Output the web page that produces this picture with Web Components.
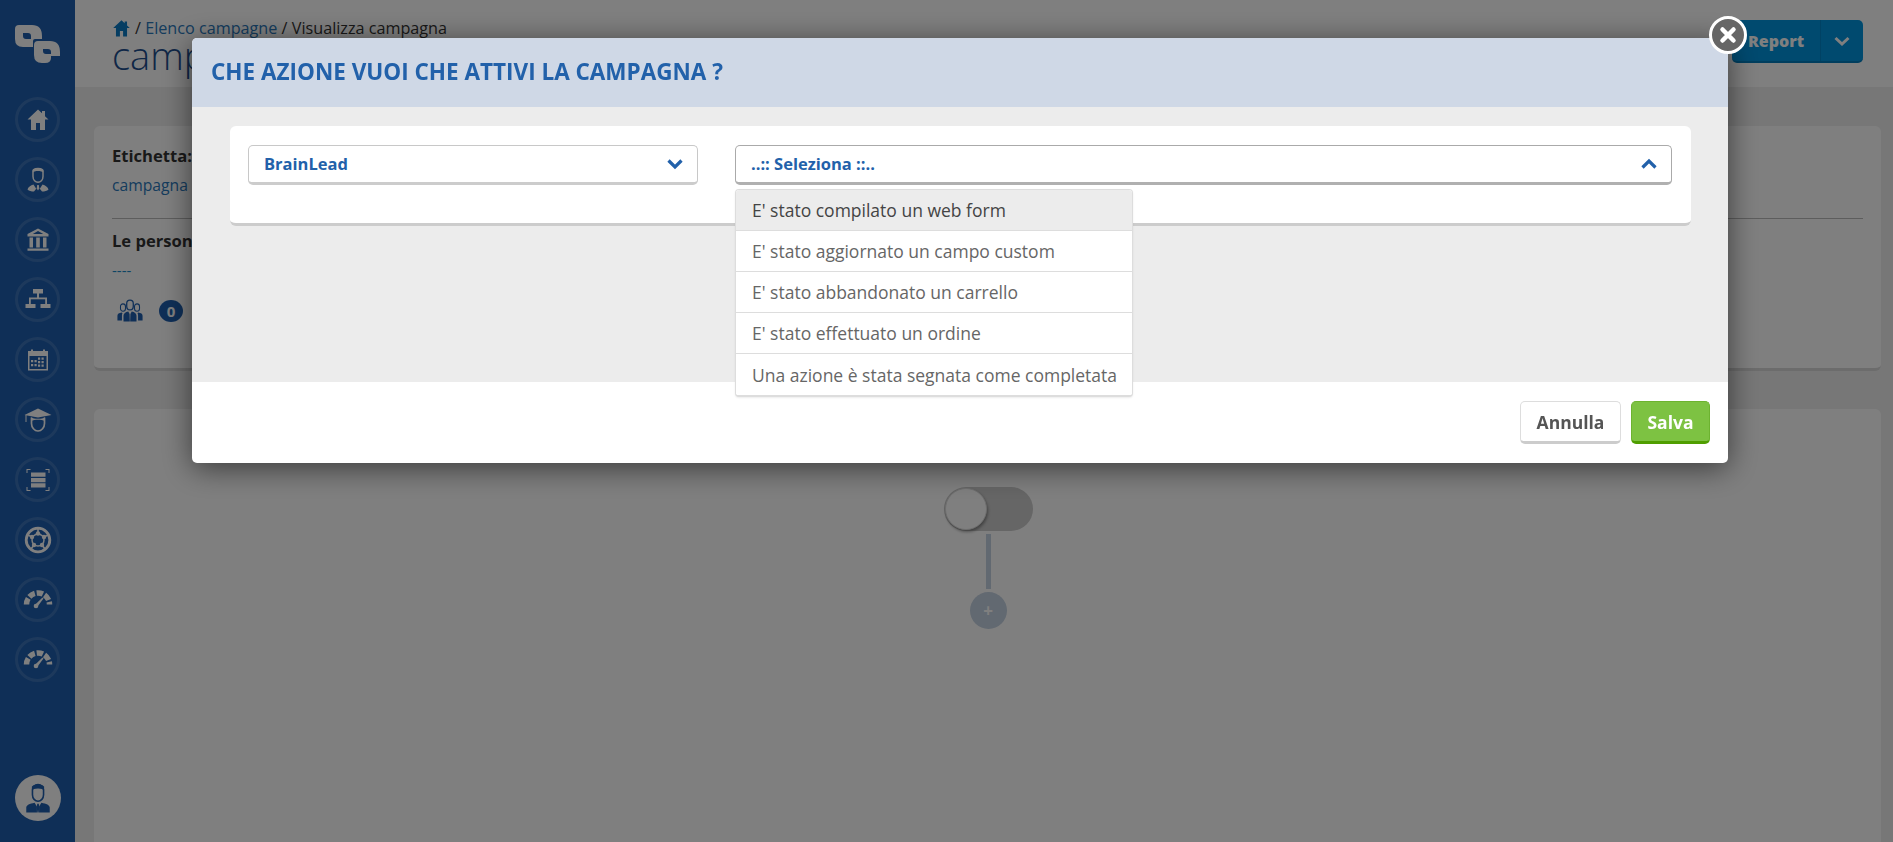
<!DOCTYPE html>
<html lang="it">
<head>
<meta charset="utf-8">
<title>Visualizza campagna</title>
<style>
  html,body{margin:0;height:842px;overflow:hidden;background:#eee;font-family:"Open Sans","Liberation Sans",sans-serif;color:#333}
  body{display:flex}
</style>
</head>
<body>
<app-sidebar>
  <nav-icon name="home"></nav-icon>
  <nav-icon name="advisor"></nav-icon>
  <nav-icon name="bank"></nav-icon>
  <nav-icon name="org"></nav-icon>
  <nav-icon name="calendar"></nav-icon>
  <nav-icon name="grad"></nav-icon>
  <nav-icon name="scan"></nav-icon>
  <nav-icon name="ball"></nav-icon>
  <nav-icon name="gauge"></nav-icon>
  <nav-icon name="gauge"></nav-icon>
</app-sidebar>
<app-main></app-main>
<action-modal title="CHE AZIONE VUOI CHE ATTIVI LA CAMPAGNA ?">
  <form-select value="BrainLead"></form-select>
  <form-select value="..:: Seleziona ::.." open grow>
    <menu-item active>E' stato compilato un web form</menu-item>
    <menu-item>E' stato aggiornato un campo custom</menu-item>
    <menu-item>E' stato abbandonato un carrello</menu-item>
    <menu-item>E' stato effettuato un ordine</menu-item>
    <menu-item>Una azione è stata segnata come completata</menu-item>
  </form-select>
</action-modal>
<script>
const ICONS = {
  home:`<path fill="currentColor" d="M15 4.500 4.500 14.500H8V25h5v-7h4v7h5V14.500h3.500L22 11.200V6h-3v2.300z"/>`,
  advisor:`<g fill="currentColor"><path fill="none" stroke="currentColor" stroke-width="1.500" d="M10 6.500c0-1.800 2.200-3 5-3s5 1.200 5 3v5c0 3.500-2.500 5.800-5 5.800s-5-2.300-5-5.800z"/><path d="M9.800 7.500c1.300-2 8.900-2 10.400 0l.2-2.500c-1.500-2.300-9.300-2.300-10.800 0z"/><path d="M4.500 24.500c.6-2.400 3.100-4 6-5l2.700 4.300-2.200 2.700c-2.700 0-5-.6-6.500-2zM25.500 24.500c-.6-2.400-3.100-4-6-5l-2.700 4.300 2.200 2.700c2.700 0 5-.6 6.500-2z"/><path d="M14.200 20h1.600l.5 3.500-1.300 2-1.300-2z"/></g>`,
  bank:`<g fill="currentColor"><path d="M15 3.500 4.500 9v2.500h21V9zM15 6 9.800 9h10.400z" fill-rule="evenodd"/><path d="M6.500 12.500h3.500v10H6.500zM13.200 12.500h3.600v10h-3.600zM20 12.500h3.500v10H20zM4.500 23.500h21v2.200h-21z"/></g>`,
  org:`<g fill="currentColor"><rect x="10" y="4" width="10" height="4.500"/><rect x="14" y="8" width="2" height="5"/><rect x="6" y="12.500" width="18" height="1.800"/><rect x="6" y="13" width="1.800" height="6"/><rect x="22.200" y="13" width="1.800" height="6"/><rect x="2.500" y="19" width="10" height="4"/><rect x="17.500" y="19" width="10" height="4"/></g>`,
  calendar:`<g fill="currentColor"><path fill-rule="evenodd" d="M5 6h3V4.500h2V6h10V4.500h2V6h3v19.500H5zM6.500 11v13h17V11z"/><path d="M8 15h2.200v2.200H8zM11.500 15h2.200v2.200h-2.200zM15 12.500h2.200v2.200H15zM18.500 12.500h2.200v2.200h-2.200zM15 16h2.200v2.200H15zM18.500 16h2.200v2.200h-2.200zM8 19h2.200v2.200H8zM11.500 19h2.200v2.200h-2.200zM15 19.500h2.200v2.200H15zM18.500 19.500h2.200v2.200h-2.200z"/></g>`,
  grad:`<g fill="currentColor"><path d="M15 3.500 1.500 10l13.500 2.500L28.500 10z"/><rect x="2.500" y="10" width="1" height="7"/><path fill="none" stroke="currentColor" stroke-width="1.700" d="M8.500 12.500v6c0 4 3 7.500 6.500 7.500s6.500-3.500 6.500-7.500v-6"/><path d="M8 12.500c3 1.800 11 1.800 14 0v3.500c-4-1.800-10-1.800-14 0z"/></g>`,
  scan:`<g fill="currentColor"><path d="M3.500 4h4v1h-3v3h-1zM26.500 4h-4v1h3v3h1zM3.500 26h4v-1h-3v-3h-1zM26.500 26h-4v-1h3v-3h1z"/><path d="M8 7.500h14.500v4.300H8zM8 12.900h14.500v4.300H8zM8 18.300h14.500v4.300H8z"/></g>`,
  ball:`<g fill="none" stroke="currentColor"><circle cx="15" cy="15" r="11.800" stroke-width="2.800"/><circle cx="15" cy="15" r="6" stroke-width="1.500"/><path stroke-width="1.600" d="M4 10l6 2M26 10l-6 2M8 24l3-4M22 24l-3-4M15 3.500v5"/><g fill="currentColor" stroke="none"><circle cx="9" cy="12" r="2.200"/><circle cx="21" cy="12" r="2.200"/><circle cx="11" cy="20" r="2.200"/><circle cx="19" cy="20" r="2.200"/><circle cx="15" cy="8.500" r="2.200"/></g></g>`,
  gauge:`<path fill="none" stroke="currentColor" stroke-width="5.500" stroke-dasharray="6.400 1.900" d="M3.500 19.500A11.500 11.500 0 0 1 26.500 19.500"/><g fill="currentColor"><circle cx="13" cy="21" r="2.300"/><path d="M12 19.800 19.500 12.500l1 1-6.300 8.500z"/></g>`
};
const icon = (n,s=30) => `<svg width="${s}" height="${s}" viewBox="0 0 30 30" aria-hidden="true">${ICONS[n]}</svg>`;
const PERSON = `<g fill="currentColor"><path fill="none" stroke="currentColor" stroke-width="1.500" d="M9.800 7c0-2.500 2.300-4.500 5.200-4.500S20.200 4.500 20.200 7v5c0 3.400-2.400 6-5.200 6s-5.200-2.600-5.200-6z"/><path d="M9.500 8c1-1.300 2-2 5.500-2s4.500.7 5.500 2l.3-3.500C19 1.200 11 1.200 9.200 4.500z"/><path d="M4 28.500V24c0-2.400 3.200-3.700 7.800-4.600l2.200 3.600v5.500zM26 28.500V24c0-2.400-3.200-3.700-7.800-4.600L16 23v5.500z"/><path d="M14.300 20.500h1.400l.5 3-.6 5h-1.200l-.6-5z"/></g>`;
const GROUP = `<g fill="currentColor"><path fill="none" stroke="currentColor" stroke-width="1.500" d="M11.200 6.500c0-2.400 1.700-4 3.800-4s3.800 1.600 3.800 4v3c0 2.500-1.800 4.300-3.800 4.300s-3.800-1.800-3.800-4.300z"/><path fill="none" stroke="currentColor" stroke-width="1.200" d="M4 10c0-2 1.200-3.200 2.900-3.200S9.800 8 9.800 10v2c0 2-1.300 3.200-2.900 3.200S4 14 4 12zM20.200 10c0-2 1.200-3.200 2.900-3.200S26 8 26 10v2c0 2-1.300 3.200-2.900 3.200S20.200 14 20.200 12z"/><path d="M7.500 27v-6.500c0-3 2.300-4.300 5.500-5l1.500 3 .3 8.500zM22.500 27v-6.500c0-3-2.300-4.300-5.500-5l-1.500 3-.3 8.500zM.5 26v-5.500c0-2.300 1.700-3.300 5-3.800l.8 1c-.4.8-.6 1.500-.6 2.500V26zM29.500 26v-5.500c0-2.300-1.700-3.300-5-3.800l-.8 1c.4.8.6 1.500.6 2.500V26z"/></g>`;

class Base extends HTMLElement {
  constructor(){ super(); this.attachShadow({mode:'open'}); }
  connectedCallback(){ this.shadowRoot.innerHTML = this.render(); }
}

customElements.define('app-sidebar', class extends Base {
  render(){ return `<style>
    :host{display:flex;flex-direction:column;align-items:center;flex:none;width:75px;height:842px;background:#1e5eae;box-sizing:border-box;padding:25px 0 21px;color:#fff}
    .logo{display:block;margin-bottom:34px}
    nav{display:flex;flex-direction:column;gap:15px}
    .me{margin-top:auto;width:46px;height:46px;border-radius:50%;background:#fff;color:#1e5eae;display:flex;align-items:center;justify-content:center;overflow:hidden}
  </style>
  <svg class="logo" width="45" height="38" viewBox="0 0 45 38" aria-hidden="true"><g fill="#fff" fill-rule="evenodd"><path d="M0 4Q0 0 4 0H17Q27 0 27 11V14H20Q18 14 18 16V22H8Q0 22 0 14ZM8 8H13Q16 8 16 11V14H11Q8 14 8 11Z"/><path d="M19 20Q19 16 23 16H35Q45 16 45 27V31H36V33Q36 38 30 38H27Q19 38 19 30ZM28 24H33Q36 24 36 27V29H31Q28 29 28 26Z"/></g></svg>
  <nav><slot></slot></nav>
  <div class="me"><svg width="32" height="32" viewBox="0 0 30 30" aria-hidden="true">${PERSON}</svg></div>`; }
});

customElements.define('nav-icon', class extends Base {
  render(){ return `<style>
    :host{display:flex;align-items:center;justify-content:center;width:45px;height:45px;box-sizing:border-box;border:3px solid rgba(255,255,255,.13);border-radius:50%;color:#fff}
    svg{display:block;flex:none}
  </style>${icon(this.getAttribute('name'))}`; }
});

customElements.define('page-header', class extends Base {
  render(){ return `<style>
    :host{display:flex;justify-content:space-between;align-items:flex-start;height:87px;box-sizing:border-box;background:#fff;padding:0 30px 0 37px;overflow:hidden}
    .crumb{display:flex;align-items:center;gap:4px;height:20px;margin-top:18px;font-size:16.200px;color:#333;white-space:nowrap}
    .crumb a{color:#2a78bb}
    .crumb svg{color:#0a7ac4}
    h1{margin:-8px 0 0;font-size:38px;line-height:50px;font-weight:300;color:#1f4f8e}
    .split{display:flex;height:43px;margin-top:20px;width:131px;border-radius:5px;background:#0094df;color:#fff;font-weight:700;font-size:16px;border-bottom:2px solid #007dbd;box-sizing:border-box}
    .split b{display:flex;align-items:center;justify-content:flex-end;padding-right:16px;width:89px;box-sizing:border-box;border-right:1px solid #0084c8}
    .split i{display:flex;flex:1;align-items:center;justify-content:center}
  </style>
  <div><div class="crumb"><svg width="19" height="19" viewBox="3 3 24 24" aria-hidden="true">${ICONS.home}</svg><span>/ <a>Elenco campagne</a> / Visualizza campagna</span></div>
  <h1>campagna</h1></div>
  <div class="split"><b>Report</b><i><svg width="16" height="12" viewBox="0 0 16 12" aria-hidden="true"><path d="M1.500 3 8 9l6.500-6" fill="none" stroke="currentColor" stroke-width="3"/></svg></i></div>`; }
});

customElements.define('page-card', class extends Base {
  render(){ return `<style>
    :host{display:block;background:#fff;border-radius:6px;box-sizing:border-box}
    :host([fill]){flex:1;margin-top:38px}
    :host(:not([fill])){height:245px;border-bottom:3px solid #d8d8d8;padding:0 18px 0 18px}
  </style><slot></slot>`; }
});

customElements.define('info-block', class extends Base {
  render(){ return `<style>
    :host{display:block}
    h4{margin:0;font-size:16.600px;font-weight:700;color:#333;line-height:20px}
    .a{margin-top:9px;height:20px;font-size:15.700px;line-height:20px;color:#2a78bb;white-space:nowrap}
    .l1{padding-top:20px;height:93px;box-sizing:border-box;border-bottom:1px solid #bbb}
    .l2{padding-top:12px}
    .l2 .a{color:#1a8ac8;font-size:15px}
    .stat{display:flex;align-items:center;gap:16px;margin-top:18px;padding-left:5px;color:#1e5eae}
    .n{display:flex;align-items:center;justify-content:center;width:24px;height:22px;border-radius:50%;background:#1e5eae;color:#fff;font-weight:700;font-size:15px}
  </style>
  <div class="l1"><h4>Etichetta:</h4><div class="a">campagna c</div></div>
  <div class="l2"><h4>Le persone</h4><div class="a">----</div>
  <div class="stat"><svg width="26" height="26" viewBox="0 0 30 30" aria-hidden="true">${GROUP}</svg><span class="n">0</span></div></div>`; }
});

customElements.define('flow-start', class extends Base {
  render(){ return `<style>
    :host{display:flex;flex-direction:column;align-items:center;padding-top:78px;margin-left:1px}
    .tg{width:89px;height:44px;border-radius:22px;background:#ccc;box-sizing:border-box;padding:1px}
    .kn{width:40px;height:40px;border-radius:50%;background:#fff;border:1px solid #ddd;box-shadow:1px 2px 3px rgba(0,0,0,.35)}
    .ln{width:5px;height:55px;margin-top:3px;background:#c4d2e2}
    .pl{width:37px;height:37px;border-radius:50%;margin-top:3px;background:#c4d2e2;color:#fff;display:flex;align-items:center;justify-content:center;font-weight:700;font-size:17px}
  </style><div class="tg"><div class="kn"></div></div><div class="ln"></div><div class="pl">+</div>`; }
});

customElements.define('app-main', class extends Base {
  render(){ return `<style>
    :host{display:flex;flex-direction:column;flex:1;min-width:0;height:842px}
    .c{flex:1;display:flex;flex-direction:column;padding:39px 12px 0 19px;margin-bottom:-40px}
  </style>
  <page-header></page-header>
  <div class="c">
    <page-card><info-block></info-block></page-card>
    <page-card fill><flow-start></flow-start></page-card>
  </div>`; }
});

customElements.define('action-modal', class extends Base {
  render(){ return `<style>
    :host{position:fixed;inset:0;background:rgba(0,0,0,.5);z-index:10;box-sizing:border-box;padding:38px 0 0 192px;display:block}
    .m{position:relative;width:1536px;height:425px;border-radius:5px;background:#fff;box-shadow:0 5px 30px rgba(0,0,0,.55);display:flex;flex-direction:column}
    header{height:69px;flex:none;background:#cfd8e6;border-radius:5px 5px 0 0;display:flex;align-items:center;padding:0 0 3px 19px;box-sizing:border-box}
    h2{margin:0;font-size:22.500px;font-weight:700;color:#2261aa}
    .b{height:275px;flex:none;background:#ececec;box-sizing:border-box;padding:19px 37px 0 38px}
    .card{height:100px;box-sizing:border-box;background:#fff;border-radius:6px;border-bottom:3px solid #ccc;padding:19px 19px 0 18px;display:flex;gap:37px;align-items:flex-start}
    footer{flex:1;display:flex;justify-content:flex-end;gap:10px;padding:19px 18px 0 0}
    button{height:43px;box-sizing:border-box;border-radius:5px;font:700 17.500px "Open Sans","Liberation Sans",sans-serif;padding:0}
    .ann{width:101px;background:#fff;border:1px solid #ddd;border-bottom:3px solid #ccc;color:#555}
    .sav{width:79px;background:#7dc242;border:1px solid #6db330;border-bottom:3px solid #4f9e00;color:#fff}
    .x{position:absolute;right:-19px;top:-22px;width:38px;height:38px;box-sizing:border-box;border:3px solid #fff;border-radius:50%;background:#666;display:flex;align-items:center;justify-content:center}
  </style>
  <div class="m" role="dialog">
    <header><h2>${this.getAttribute('title')}</h2></header>
    <div class="b"><div class="card"><slot></slot></div></div>
    <footer><button class="ann">Annulla</button><button class="sav">Salva</button></footer>
    <div class="x"><svg width="18" height="18" viewBox="0 0 18 18" aria-hidden="true"><path d="M3.500 3.500l11 11M14.500 3.500l-11 11" stroke="#fff" stroke-width="4.500" stroke-linecap="round"/></svg></div>
  </div>`; }
});

customElements.define('form-select', class extends Base {
  render(){ const open=this.hasAttribute('open'); return `<style>
    :host{display:block;position:relative;flex:none;width:450px}
    :host([grow]){flex:1;width:auto}
    .f{height:40px;box-sizing:border-box;border:1px solid ${open?'#aaa':'#c8c8c8'};border-bottom:3px solid ${open?'#b0b0b0':'#ccc'};border-radius:5px;background:#fff;display:flex;align-items:center;justify-content:space-between;padding:0 14px 2px 15px;font-weight:700;font-size:16.500px;color:#2261aa}
    .f svg{margin-top:2px}
    .menu{position:absolute;left:0;top:44px;width:398px;box-sizing:border-box;background:#fff;border:1px solid #ddd;border-bottom:2px solid #ddd;border-radius:4px;overflow:hidden;z-index:2;box-shadow:0 1px 2px rgba(0,0,0,.08)}
  </style>
  <div class="f"><span>${this.getAttribute('value')}</span><svg width="16" height="12" viewBox="0 0 16 12" aria-hidden="true"><path d="${open?'M1.500 9.500 8 3l6.500 6.500':'M1.500 2.500 8 9l6.500-6.500'}" fill="none" stroke="#2261aa" stroke-width="3.200"/></svg></div>
  ${open?'<div class="menu"><slot></slot></div>':''}`; }
});

customElements.define('menu-item', class extends Base {
  render(){ return `<style>
    :host{display:flex;align-items:center;height:41px;box-sizing:border-box;padding-left:16px;font-size:17.500px;color:#666;background:#fff;border-bottom:1px solid #ddd;white-space:nowrap}
    :host([active]){background:#ececec;color:#444}
    :host(:last-child){border-bottom:0}
  </style><slot></slot>`; }
});
</script>
</body>
</html>
